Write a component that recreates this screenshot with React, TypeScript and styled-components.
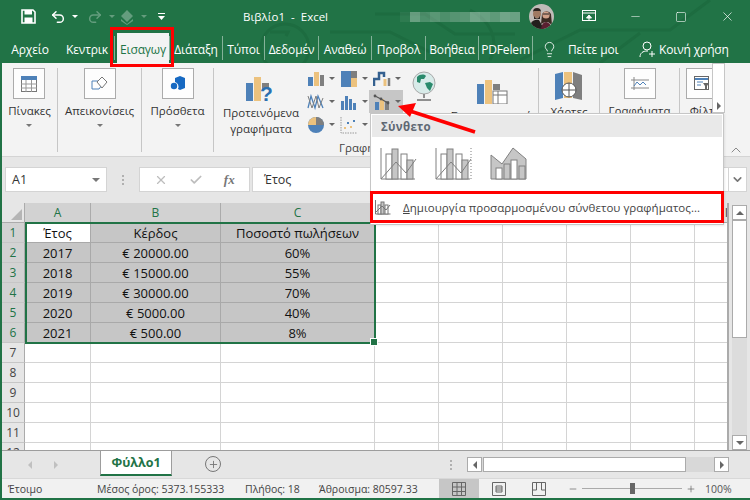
import React from "react";
import styled, { createGlobalStyle } from "styled-components";
import { Undo2, Redo2, ChevronDown, ChevronUp, X, Check, Square, Minus, Plus, Lightbulb } from "lucide-react";

const Global = createGlobalStyle`
  html, body { margin: 0; padding: 0; width: 750px; height: 500px; overflow: hidden; }
  body { font-family: "Open Sans", "Noto Sans", "Liberation Sans", sans-serif; }
  * { box-sizing: border-box; }
`;

const Window = styled.div`
  position: relative; width: 750px; height: 500px; overflow: hidden;
  display: flex; flex-direction: column; background: #217346;
  padding: 0 2px 2px 2px;
  & > * { flex: none; }
`;
const Top = styled.div`
  position: relative; margin: 0 -2px; height: 63px; background: #217346; overflow: hidden;
  display: flex; flex-direction: column;
`;
const Pattern = styled.svg`
  position: absolute; left: 0; top: 0; width: 750px; height: 63px; pointer-events: none;
`;
const TitleBar = styled.div`
  position: relative; height: 33px; display: flex; align-items: center; color: #fff;
`;
const Qat = styled.div`
  display: flex; align-items: center; width: 243px; padding-left: 21px; height: 100%;
`;
const QatItem = styled.span<{ $w: number; $dim?: boolean }>`
  width: ${(p) => p.$w}px; display: flex; align-items: center; opacity: ${(p) => (p.$dim ? 0.3 : 1)};
`;
const Caret = styled.span<{ $color?: string; $size?: number }>`
  display: inline-block; width: 0; height: 0;
  border-left: ${(p) => p.$size ?? 3}px solid transparent;
  border-right: ${(p) => p.$size ?? 3}px solid transparent;
  border-top: ${(p) => p.$size ?? 3}px solid ${(p) => p.$color ?? "#fff"};
`;
const DocTitle = styled.div`
  width: 157px; font-size: 11.5px; text-align: left; white-space: pre;
`;
const Blur = styled.div`
  display: flex; width: 120px; height: 10px;
`;
const BlurCell = styled.span<{ $o: number }>`
  flex: 1; background: rgba(255, 255, 255, ${(p) => p.$o});
`;
const Avatar = styled.div`
  width: 25px; height: 25px; margin-left: 9px; border-radius: 50%; overflow: hidden; flex: none;
`;
const WinButtons = styled.div`
  display: flex; align-items: center; margin-left: auto; height: 100%;
`;
const WinButton = styled.div`
  width: 46px; display: flex; justify-content: center; align-items: center;
`;
const TabRow = styled.div`
  position: relative; height: 30px; display: flex; align-items: center; color: #fff;
`;
const Tab = styled.div<{ $w: number; $active?: boolean; $sep?: boolean; $ml?: number }>`
  width: ${(p) => p.$w}px; flex: none; height: ${(p) => (p.$active ? 30 : 24)}px;
  align-self: ${(p) => (p.$active ? "flex-end" : "center")};
  margin-left: ${(p) => p.$ml ?? 0}px;
  display: flex; align-items: center; justify-content: center; overflow: hidden;
  white-space: nowrap; font-size: 12px; letter-spacing: -0.15px;
  padding-top: ${(p) => (p.$active ? 3 : 2)}px;
  background: ${(p) => (p.$active ? "#f3f3f3" : "transparent")};
  color: ${(p) => (p.$active ? "#217346" : "#fff")};
  border-right: ${(p) => (p.$sep ? "1px solid rgba(255,255,255,.45)" : "none")};
`;
const TabSep = styled.span`
  width: 1px; height: 24px; background: rgba(255,255,255,.45); flex: none; margin-right: -1px;
`;
const TabAction = styled.div<{ $w: number }>`
  width: ${(p) => p.$w}px; display: flex; align-items: center; font-size: 12px; letter-spacing: -0.15px; flex: none; white-space: nowrap; padding-top: 2px;
`;
const TipIcon = styled.span`
  display: flex; margin-left: 8px; margin-right: 10px;
`;
const ShareIcon = styled.span`
  display: flex; margin-right: 3px;
`;

const Ribbon = styled.div`
  position: relative; height: 94px; margin-right: -2px; background: #f3f3f3; display: flex; padding-top: 5px; padding-bottom: 4px;
  border-bottom: 1px solid #d4d4d4;
  overflow: hidden;
`;
const Group = styled.div<{ $w: number; $last?: boolean }>`
  width: ${(p) => p.$w}px; flex: none; height: 84px; border-right: ${(p) => (p.$last ? "none" : "1px solid #c6c6c6")};
  display: flex; justify-content: center;
`;
const Big = styled.div<{ $top?: number; $nudge?: number }>`
  display: flex; flex-direction: column; align-items: center; font-size: 11.5px; color: #333;
  padding-top: ${(p) => p.$top ?? 0}px; margin-left: ${(p) => p.$nudge ?? 0}px;
`;
const IconBox = styled.div`
  width: 32px; height: 31px; background: #fdfdfd; border: 1px solid #ababab;
  display: flex; align-items: center; justify-content: center; flex: none;
`;
const BigLabel = styled.div`
  margin-top: 3px; height: 17px; line-height: 17px; white-space: nowrap;
`;
const BigCaret = styled.div`
  margin-top: 5px; height: 8px; display: flex; justify-content: center;
`;
const ChartsGroup = styled(Group)`
  justify-content: flex-start; position: relative;
`;
const Recommend = styled.div`
  width: 84px; margin-left: 5px; flex: none; display: flex; flex-direction: column; align-items: center; padding-top: 9px;
  font-size: 11.5px; color: #333; text-align: center; line-height: 16px; white-space: nowrap;
`;
const MiniGrid = styled.div`
  flex: none; display: grid; grid-template-columns: 33px 33px 34px; grid-auto-rows: 23px; margin-top: -1px; width: 100px; height: 69px;
`;
const MiniBtn = styled.div<{ $on?: boolean }>`
  display: flex; align-items: center; justify-content: center; gap: 4px; padding-left: 2px;
  background: ${(p) => (p.$on ? "#c6c6c6" : "transparent")};
`;
const MapCol = styled.div`
  width: 41px; flex: none; display: flex; flex-direction: column; align-items: center; padding-top: 3px; font-size: 11.5px; color: #333;
`;
const PivotCol = styled(MapCol)`
  width: 95px; padding-top: 14px; white-space: nowrap;
`;
const GroupTitle = styled.div`
  position: absolute; left: 125px; top: 72px; width: 70px; font-size: 11.5px; color: #444; overflow: hidden; white-space: nowrap;
`;
const Strip = styled.div`
  width: 13px; height: 50px; flex: none; background: #fff; border: 1px solid #c6c6c6;
  margin-top: -5px; display: flex; align-items: flex-end; justify-content: center; padding-bottom: 2px;
`;
const Collapse = styled.div`
  position: absolute; right: 6px; bottom: -2px; color: #555; display: flex;
`;

const FormulaBar = styled.div`
  height: 46px; margin-right: -2px; background: #e6e6e6; display: flex; align-items: flex-start; padding: 10px 3px 0 3px;
`;
const NameBox = styled.div`
  width: 102px; height: 25px; background: #fff; border: 1px solid #d4d4d4; display: flex; align-items: center;
  justify-content: space-between; padding: 0 6px; font-size: 12.5px; color: #333;
`;
const Dots = styled.div`
  width: 32px; height: 25px; display: flex; flex-direction: column; align-items: center; justify-content: center; gap: 2px;
`;
const Dot = styled.span`
  width: 2px; height: 2px; background: #b0b0b0;
`;
const FxBox = styled.div`
  width: 111px; height: 25px; background: #fff; border: 1px solid #d4d4d4; display: flex; align-items: center;
  justify-content: space-around; padding: 0 4px; color: #bdbdbd;
`;
const Fx = styled.i`
  font-family: "Liberation Serif", serif; font-size: 13px; color: #777; font-weight: bold;
`;
const FormulaInput = styled.div`
  width: 477px; margin-left: 2px; height: 25px; background: #fff; border: 1px solid #d4d4d4; font-size: 12.5px; color: #333;
  display: flex; align-items: center; padding-left: 11px;
`;
const Expand = styled.div`
  width: 18px; height: 25px; background: #fff; border: 1px solid #d4d4d4; border-left: none; display: flex; align-items: center; justify-content: center;
  color: #777;
`;

const SheetArea = styled.div`
  display: flex; height: 248px; background: #e6e6e6; margin-right: -2px; border-bottom: 1px solid #9d9d9d;
`;
const Grid = styled.div`
  width: 727px; height: 247px; overflow: hidden; position: relative; background: #fff; border-right: 2px solid #ababab;
  display: grid; grid-template-columns: 23px 66px 130px 154px repeat(6, 64px); grid-auto-rows: 20px;
  align-content: start; flex: none;
`;
const Corner = styled.div`
  background: #e6e6e6; border-right: 1px solid #ababab; border-bottom: 1px solid #ababab; position: relative;
  &::after { content: ""; position: absolute; right: 2px; bottom: 2px; border-style: solid; border-width: 0 0 11px 11px; border-color: transparent transparent #b5b5b5 transparent; }
`;
const ColHead = styled.div<{ $sel?: boolean }>`
  background: ${(p) => (p.$sel ? "#d2d2d2" : "#e6e6e6")}; border-right: 1px solid #ababab; border-bottom: 1px solid #ababab;
  font-size: 12px; color: ${(p) => (p.$sel ? "#217346" : "#444")}; display: flex; align-items: center; justify-content: center; padding-bottom: 1px;
`;
const RowHead = styled.div<{ $sel?: boolean }>`
  background: ${(p) => (p.$sel ? "#d2d2d2" : "#e6e6e6")}; border-right: 1px solid #ababab; border-bottom: 1px solid #c6c6c6;
  font-size: 12px; color: ${(p) => (p.$sel ? "#217346" : "#444")}; display: flex; align-items: center; justify-content: center;
`;
const Cell = styled.div<{ $sel?: boolean; $active?: boolean }>`
  background: ${(p) => (p.$active ? "#fff" : p.$sel ? "#c6c6c6" : "#fff")};
  border-right: 1px solid ${(p) => (p.$sel ? "#a9a9a9" : "#d4d4d4")};
  border-bottom: 1px solid ${(p) => (p.$sel ? "#a9a9a9" : "#d4d4d4")};
  font-size: 13px; color: #111; display: flex; align-items: center; justify-content: center; white-space: nowrap;
`;
const Selection = styled.div`
  position: absolute; left: 23px; top: 19px; width: 351px; height: 122px; border: 2px solid #217346; pointer-events: none;
  &::after { content: ""; position: absolute; right: -4px; bottom: -4px; width: 6px; height: 6px; background: #217346; border: 1px solid #fff; }
`;
const VScroll = styled.div`
  flex: 1; display: flex; flex-direction: column; align-items: center; padding: 2px 3px 0 3px;
`;
const ScrollBtn = styled.div`
  width: 15px; height: 15px; background: #fff; border: 1px solid #ababab; display: flex; align-items: center; justify-content: center; flex: none;
`;
const VTrack = styled.div`
  width: 15px; flex: 1; background: #dcdcdc; display: flex; flex-direction: column;
`;
const VThumb = styled.div`
  width: 15px; height: 118px; background: #fff; border: 1px solid #ababab;
`;
const UpCaret = styled.span`
  width: 0; height: 0; border-left: 4px solid transparent; border-right: 4px solid transparent; border-bottom: 4px solid #666;
`;

const TabsBar = styled.div`
  height: 27px; margin-right: -2px; background: #e6e6e6; display: flex; align-items: flex-start; position: relative;
`;
const SheetNav = styled.div`
  width: 98px; height: 27px; display: flex; align-items: center; padding-left: 26px; gap: 22px;
`;
const SheetTab = styled.div`
  width: 72px; height: 25px; margin-top: 0; background: #fff; border-left: 1px solid #9d9d9d; border-right: 1px solid #9d9d9d;
  border-bottom: 2px solid #217346; color: #217346; font-weight: 700; font-size: 12.5px;
  display: flex; align-items: center; justify-content: center;
`;
const AddSheet = styled.div`
  margin-left: 33px; margin-top: 5px; width: 16px; height: 16px; border-radius: 50%; border: 1.5px solid #777; color: #777;
  display: flex; align-items: center; justify-content: center;
`;
const SplitDots = styled(Dots)`
  position: absolute; left: 433px; top: 1px;
`;
const HScroll = styled.div`
  position: absolute; left: 465px; top: 6px; width: 262px; height: 15px; display: flex; background: #d8d8d8;
`;
const HBtn = styled.div`
  width: 15px; height: 15px; background: #fff; border: 1px solid #ababab; display: flex; align-items: center; justify-content: center; flex: none;
`;
const HThumb = styled.div`
  width: 203px; height: 15px; background: #fff; border: 1px solid #ababab; margin-left: 1px; margin-right: auto;
`;
const Arrow = styled.span<{ $dir: "l" | "r"; $c?: string }>`
  width: 0; height: 0; border-top: 4px solid transparent; border-bottom: 4px solid transparent;
  ${(p) => (p.$dir === "l" ? `border-right: 4px solid ${p.$c ?? "#666"};` : `border-left: 4px solid ${p.$c ?? "#666"};`)}
`;

const Status = styled.div`
  height: 20px; margin-right: -2px; background: #f1f1f1; border-top: 1px solid #d8d8d8; display: flex; align-items: center; font-size: 10.5px; color: #444;
  white-space: nowrap;
`;
const StatusText = styled.span<{ $w: number; $pad?: number }>`
  width: ${(p) => p.$w}px; flex: none; padding-left: ${(p) => p.$pad ?? 0}px;
`;
const ViewBtn = styled.div<{ $on?: boolean }>`
  width: 40px; height: 19px; background: ${(p) => (p.$on ? "#c6c6c6" : "transparent")}; display: flex; align-items: center; justify-content: center; flex: none;
`;
const Zoom = styled.div`
  display: flex; align-items: center; margin-left: 9px; color: #555;
`;
const ZoomTrack = styled.div`
  position: relative; width: 100px; height: 1px; background: #aaa; margin: 0 4px;
`;
const ZoomThumb = styled.span`
  position: absolute; left: 48px; top: -5px; width: 5px; height: 11px; background: #666;
`;
const ZoomPct = styled.span`
  margin-left: 9px;
`;

const Menu = styled.div`
  position: absolute; left: 370px; top: 113px; width: 354px; height: 112px; background: #fff; border: 1px solid #c6c6c6;
  box-shadow: 1px 1px 2px rgba(0,0,0,.08);
  padding: 1px; display: flex; flex-direction: column;
`;
const MenuHead = styled.div`
  height: 22px; background: #e9e9e9; font-size: 11.5px; font-weight: 700; color: #5f6873; display: flex; align-items: center; padding-left: 9px; letter-spacing: .3px;
`;
const MenuIcons = styled.div`
  height: 52px; display: flex; align-items: center; padding-left: 8px; gap: 18px;
`;
const MenuItem = styled.div`
  flex: 1; display: flex; align-items: center; padding-left: 3px; gap: 12px; font-size: 11.5px; color: #444; white-space: nowrap; padding-top: 2px; letter-spacing: .03px;
`;
const Underlined = styled.span`
  text-decoration: underline;
`;
const RedBoxTab = styled.div`
  position: absolute; left: 110px; top: 27px; width: 64px; height: 40px; border: 3px solid #f00;
`;
const RedBoxItem = styled.div`
  position: absolute; left: 370px; top: 191px; width: 354px; height: 32px; border: 3px solid #f00;
`;
const Pointer = styled.svg`
  position: absolute; left: 390px; top: 95px; width: 100px; height: 45px; overflow: visible;
`;

const B = "#4e81b8", Y = "#ecc27e", G = "#7f7f7f";

const ChartIcon = ({ kind }: { kind: number }) => {
  const cs: Record<number, React.ReactNode> = {
    0: <><rect x="1" y="7" width="5" height="9" fill={B} /><rect x="7" y="2" width="5" height="14" fill={Y} /><rect x="13" y="5" width="4" height="11" fill={G} /></>,
    1: <><rect x="1" y="1" width="10" height="16" fill={B} /><rect x="11" y="1" width="6" height="7" fill={G} /><rect x="11" y="8" width="6" height="9" fill={Y} /></>,
    2: <><path d="M1 16V9h5V3h5v4" fill="none" stroke="#34608f" strokeWidth="2.500" /><path d="M12 16v-7" stroke={Y} strokeWidth="3" /><path d="M16 16V8" stroke={G} strokeWidth="2.500" /></>,
    3: <><path d="M1 15L4 3l4 12 3-12 5 12" fill="none" stroke={B} strokeWidth="1.3" /><path d="M1 3l4 12 4-12 3 12 4-10" fill="none" stroke={G} strokeWidth="1" /></>,
    4: <><rect x="1" y="8" width="3" height="9" fill={B} /><rect x="5" y="3" width="3" height="14" fill={B} /><rect x="9" y="6" width="3" height="11" fill={B} /><rect x="13" y="10" width="3" height="7" fill={B} /></>,
    5: <><rect x="2" y="9" width="4" height="8" fill={B} /><rect x="7" y="6" width="4" height="11" fill={Y} /><rect x="12" y="8" width="4" height="9" fill={G} /><path d="M2 3l6 3 7 4" fill="none" stroke="#555" strokeWidth="1.2" /><circle cx="2" cy="3" r="1.400" fill="#555" /><circle cx="8" cy="6" r="1.400" fill="#555" /><circle cx="15" cy="10" r="1.400" fill="#555" /></>,
    6: <><circle cx="9" cy="9" r="8" fill={B} /><path d="M9 9V1a8 8 0 0 1 8 8z" fill={G} /><path d="M9 9H1a8 8 0 0 1 8-8z" fill={Y} /></>,
    7: <><path d="M1 1v16h16" fill="none" stroke="#999" strokeWidth="1" strokeDasharray="1.500 1" /><rect x="4" y="11" width="2" height="2" fill={Y} /><rect x="7" y="6" width="2" height="2" fill={B} /><rect x="10" y="10" width="2" height="2" fill={Y} /><rect x="13" y="4" width="2" height="2" fill={B} /></>,
  };
  return <svg width="18" height="18" viewBox="0 0 18 18">{cs[kind]}</svg>;
};

const ComboIcon = ({ variant }: { variant: number }) => {
  if (variant === 2) {
    return (
      <svg width="37" height="33" viewBox="0 0 37 33" fill="none">
        <path d="M1 32V8l11 9 11-16 13 11v20z" fill="#c6c6c6" stroke="#808080" />
        <rect x="6" y="21" width="6" height="11" fill="#fff" stroke="#808080" />
        <rect x="14" y="17" width="6" height="15" fill="#c6c6c6" stroke="#808080" />
        <rect x="21" y="13" width="6" height="19" fill="#fff" stroke="#808080" />
        <rect x="29" y="19" width="6" height="13" fill="#c6c6c6" stroke="#808080" />
      </svg>
    );
  }
  return (
    <svg width="37" height="33" viewBox="0 0 37 33" fill="none">
      <path d="M1 1v31h34" stroke="#808080" />
      <rect x="6" y="7" width="6" height="25" fill="#fff" stroke="#808080" />
      <rect x="12" y="2" width="6" height="30" fill="#c6c6c6" stroke="#808080" />
      <rect x="21" y="7" width="6" height="25" fill="#fff" stroke="#808080" />
      <rect x="27" y="13" width="6" height="19" fill="#c6c6c6" stroke="#808080" />
      <path d="M1 32l15-17 10 11 10-14" stroke="#808080" />
      {variant === 1 && <path d="M36 1v31" stroke="#808080" strokeDasharray="1 2" />}
    </svg>
  );
};

const Globe = () => (
  <svg width="24" height="31" viewBox="0 0 24 31">
    <circle cx="12" cy="12" r="11" fill="#d8ebe9" stroke="#a8a8a8" />
    <path d="M5 6c3-3 7-3 9-1l-2 3-3 0-1 4-3-1zM13 12l5-1 3 2-3 7-3-3z" fill="#2a8a6c" />
    <path d="M12 23v4M5 29h14" stroke="#8f8f8f" strokeWidth="2" />
  </svg>
);

const cols = ["A", "B", "C", "D", "E", "F", "G", "H", "I"];
const data = [
  ["Έτος", "Κέρδος", "Ποσοστό πωλήσεων"],
  ["2017", "€ 20000.00", "60%"],
  ["2018", "€ 15000.00", "55%"],
  ["2019", "€ 30000.00", "70%"],
  ["2020", "€ 5000.00", "40%"],
  ["2021", "€ 500.00", "8%"],
];
const blur = [0.06, 0.32, 0.2, 0.26, 0.2, 0.24, 0.26, 0.36, 0.32, 0.28, 0.36, 0.33];
const rest = [
  { t: "Διάταξη", w: 53 },
  { t: "Τύποι", w: 42 },
  { t: "Δεδομέν", w: 54 },
  { t: "Αναθεώ", w: 53 },
  { t: "Προβολ", w: 54 },
  { t: "Βοήθεια", w: 53 },
  { t: "PDFelem", w: 54 },
];

export default function App() {
  return (
    <>
      <Global />
      <Window>
        <Top>
          <Pattern viewBox="0 0 750 63" fill="none" stroke="#1d6c40" strokeWidth="3">
            <circle cx="285" cy="48" r="24" />
            <path d="M270 32h18l-2 4M330 32h60l40 20M375 14h50l30 20 60 0M520 60l60-30h90l40-30M600 63l40-30M470 10c20 10 30 30 20 50" />
          </Pattern>
          <TitleBar>
            <Qat>
              <QatItem $w={29}>
                <svg width="15" height="15" viewBox="0 0 15 15" fill="none"><path d="M1 1h11l2 2v11H1z" stroke="#fff" strokeWidth="1.600" /><rect x="3.500" y="1" width="7.500" height="4.500" fill="#fff" /><rect x="3.500" y="8.500" width="8" height="5.500" fill="#fff" /></svg>
              </QatItem>
              <QatItem $w={22}><Undo2 size={16} strokeWidth={2.2} /></QatItem>
              <QatItem $w={15}><Caret /></QatItem>
              <QatItem $w={22} $dim><Redo2 size={16} strokeWidth={2.2} /></QatItem>
              <QatItem $w={10} $dim><Caret /></QatItem>
              <QatItem $w={22} $dim>
                <svg width="16" height="16" viewBox="0 0 16 16" fill="#fff"><path d="M8 1l6 6-6 6-6-6zM2 10l6 5 6-5v2l-6 4-6-4z" /></svg>
              </QatItem>
              <QatItem $w={17} $dim><Caret /></QatItem>
              <QatItem $w={10}>
                <svg width="7" height="7" viewBox="0 0 7 7" fill="#fff"><rect x="0" y="0" width="7" height="1" /><path d="M0 3h7L3.500 7z" /></svg>
              </QatItem>
            </Qat>
            <DocTitle>Βιβλίο1  -  Excel</DocTitle>
            <Blur>{blur.map((o, i) => <BlurCell key={i} $o={o} />)}</Blur>
            <Avatar>
              <svg width="25" height="25" viewBox="0 0 25 25">
                <rect width="25" height="25" fill="#c0bcb8" />
                <circle cx="8" cy="10" r="4" fill="#a07a63" />
                <path d="M4 8a4 4 0 0 1 8 0l-1-1H5zM5 12q3 5 6 0v3H5z" fill="#2c2420" />
                <path d="M2 25v-6q3-4 8-3l5 9z" fill="#231f1d" />
                <path d="M13 10a5 5 0 0 1 9 0l1 11-4-3h-3l-4 2z" fill="#3b2a22" />
                <circle cx="17" cy="11" r="3.600" fill="#d0a088" />
                <path d="M14 10h6" stroke="#222" strokeWidth="1" />
                <path d="M12 25q1-7 5-7t6 7z" fill="#5a2030" />
              </svg>
            </Avatar>
            <WinButtons>
              <WinButton>
                <svg width="14" height="13" viewBox="0 0 14 13" fill="none" stroke="#fff"><rect x="0.500" y="0.500" width="13" height="10" /><path d="M0 3h14" /><path d="M4.500 8L7 5l2.500 3zM7 7v4" fill="#fff" /></svg>
              </WinButton>
              <WinButton><Minus size={13} strokeWidth={1} /></WinButton>
              <WinButton><Square size={12} strokeWidth={1.2} /></WinButton>
              <WinButton><X size={15} strokeWidth={1.1} /></WinButton>
            </WinButtons>
          </TitleBar>
          <TabRow>
            <Tab $w={60}>Αρχείο</Tab>
            <Tab $w={55} $sep>Κεντρικ</Tab>
            <Tab $w={52} $active $ml={2}>Εισαγωγ</Tab>
            <TabSep />
            <Tab $w={1} />
            {rest.map((t) => <Tab key={t.t} $w={t.w} $sep>{t.t}</Tab>)}
            <TabAction $w={106}>
              <TipIcon><Lightbulb size={17} strokeWidth={1.2} /></TipIcon>
              <span>Πείτε μοι</span>
            </TabAction>
            <TabAction $w={90}>
              <ShareIcon>
                <svg width="17" height="17" viewBox="0 0 17 17" fill="none" stroke="#fff" strokeWidth="1"><circle cx="8" cy="5" r="4" /><path d="M1 16c0-4 3-6 7-6h1M13 10v6M10 13h6" /></svg>
              </ShareIcon>
              Κοινή χρήση
            </TabAction>
          </TabRow>
        </Top>
        <Ribbon>
          <Group $w={56}>
            <Big>
              <IconBox>
                <svg width="16" height="16" viewBox="0 0 16 16"><rect x="0.500" y="0.500" width="15" height="15" fill="#fff" stroke="#777" /><rect x="0" y="0" width="16" height="4" fill="#4e81b8" /><path d="M0 8h16M0 12h16M5 4v12M10.500 4v12" stroke="#999" /></svg>
              </IconBox>
              <BigLabel>Πίνακες</BigLabel>
              <BigCaret><Caret $color="#777" /></BigCaret>
            </Big>
          </Group>
          <Group $w={84}>
            <Big>
              <IconBox>
                <svg width="18" height="16" viewBox="0 0 18 16" fill="none"><path d="M1 5h7l3 4-3 4H1z" stroke="#4e81b8" /><path d="M11 1l5 5-5 6-5-6z" fill="#fff" stroke="#777" /></svg>
              </IconBox>
              <BigLabel>Απεικονίσεις</BigLabel>
              <BigCaret><Caret $color="#777" /></BigCaret>
            </Big>
          </Group>
          <Group $w={72}>
            <Big>
              <IconBox>
                <svg width="16" height="16" viewBox="0 0 16 16" fill="#1769c2"><path d="M5 2l5-2 5 2v10l-5 2-2-1a5 5 0 0 0-3-7z" /><circle cx="4" cy="10" r="3.200" /></svg>
              </IconBox>
              <BigLabel>Πρόσθετα</BigLabel>
              <BigCaret><Caret $color="#777" /></BigCaret>
            </Big>
          </Group>
          <ChartsGroup $w={325}>
            <Recommend>
              <svg width="30" height="24" viewBox="0 0 30 24" style={{ marginBottom: 4 }}>
                <rect x="0" y="6" width="7" height="18" fill={B} /><rect x="8" y="0" width="7" height="24" fill={Y} /><rect x="16" y="6" width="7" height="6" fill={G} />
                <text x="14" y="24" fontSize="21" fontWeight="700" fill="#2b70b0" fontFamily="Liberation Sans">?</text>
              </svg>
              <span>Προτεινόμενα</span>
              <span>γραφήματα</span>
            </Recommend>
            <MiniGrid>
              {[0, 1, 2, 3, 4, 5, 6, 7].map((k) => (
                <MiniBtn key={k} $on={k === 5}><ChartIcon kind={k} /><Caret $color="#666" /></MiniBtn>
              ))}
            </MiniGrid>
            <MapCol><Globe /></MapCol>
            <PivotCol>
              <svg width="32" height="24" viewBox="0 0 32 24" style={{ marginTop: -2 }}>
                <rect x="1" y="4" width="7" height="20" fill={B} /><rect x="9" y="0" width="7" height="24" fill={Y} /><rect x="17" y="4" width="7" height="6" fill={G} />
                <rect x="17" y="11" width="14" height="13" fill="#fff" stroke="#777" /><path d="M17 15h14M22 11v13" stroke="#777" />
              </svg>
              <BigLabel>Συγκεντρωτικό</BigLabel>
            </PivotCol>
            <GroupTitle>Γραφήματα</GroupTitle>
          </ChartsGroup>
          <Group $w={61}>
            <Big $top={3}>
              <svg width="30" height="29" viewBox="0 0 30 29">
                <path d="M1 3l8-2v26l-8 2z" fill={B} /><path d="M10 1h8v26h-8z" fill={Y} /><path d="M19 1l9 3v25l-9-2z" fill={G} />
                <circle cx="15" cy="19" r="7" fill="#fff" stroke="#555" /><path d="M8 19h14M15 12v14" stroke="#555" />
              </svg>
              <BigLabel>Χάρτες</BigLabel>
            </Big>
          </Group>
          <Group $w={80}>
            <Big>
              <IconBox>
                <svg width="18" height="16" viewBox="0 0 18 16" fill="none"><path d="M3 1v13M0 12h18M0 4h18" stroke="#888" /><path d="M3 10l3-4 3 3 3-3 3 3" stroke="#4e81b8" /></svg>
              </IconBox>
              <BigLabel>Γραφήματα</BigLabel>
            </Big>
          </Group>
          <Group $w={32} $last>
            <Big $nudge={12}>
              <IconBox>
                <svg width="16" height="16" viewBox="0 0 16 16"><rect x="0.500" y="0.500" width="14" height="13" fill="#fff" stroke="#666" /><rect x="1" y="2" width="13" height="2" fill={B} /><path d="M3 6h6M3 9h4" stroke="#4e81b8" /><path d="M9 7h6l-2 3v4l-2-1v-3z" fill="#666" /></svg>
              </IconBox>
              <BigLabel>Φίλτ</BigLabel>
            </Big>
          </Group>
          <Strip><Arrow $dir="r" /></Strip>
          <Collapse><ChevronUp size={16} strokeWidth={1} /></Collapse>
        </Ribbon>
        <FormulaBar>
          <NameBox>A1<Caret $color="#777" $size={4} /></NameBox>
          <Dots><Dot /><Dot /><Dot /></Dots>
          <FxBox><X size={14} /><Check size={14} strokeWidth={3} /><Fx>fx</Fx></FxBox>
          <FormulaInput>Έτος</FormulaInput>
          <Expand><ChevronDown size={13} strokeWidth={3} /></Expand>
        </FormulaBar>
        <SheetArea>
          <Grid>
            <Corner />
            {cols.map((c, i) => <ColHead key={c} $sel={i < 3}>{c}</ColHead>)}
            {Array.from({ length: 12 }).map((_, r) => (
              <React.Fragment key={r}>
                <RowHead $sel={r < 6}>{r + 1}</RowHead>
                {cols.map((c, i) => (
                  <Cell key={c} $sel={r < 6 && i < 3} $active={r === 0 && i === 0}>
                    {r < 6 && i < 3 ? data[r][i] : ""}
                  </Cell>
                ))}
              </React.Fragment>
            ))}
            <Selection />
          </Grid>
          <VScroll>
            <ScrollBtn><UpCaret /></ScrollBtn>
            <VTrack><VThumb /></VTrack>
            <ScrollBtn><Caret $color="#666" $size={4} /></ScrollBtn>
          </VScroll>
        </SheetArea>
        <TabsBar>
          <SheetNav><Arrow $dir="l" $c="#c0c0c0" /><Arrow $dir="r" $c="#c0c0c0" /></SheetNav>
          <SheetTab>Φύλλο1</SheetTab>
          <AddSheet><Plus size={11} strokeWidth={2} /></AddSheet>
          <SplitDots><Dot /><Dot /><Dot /></SplitDots>
          <HScroll>
            <HBtn><Arrow $dir="l" /></HBtn>
            <HThumb />
            <HBtn><Arrow $dir="r" /></HBtn>
          </HScroll>
        </TabsBar>
        <Status>
          <StatusText $w={95} $pad={6}>Έτοιμο</StatusText>
          <StatusText $w={148}>Μέσος όρος: 5373.155333</StatusText>
          <StatusText $w={74}>Πλήθος: 18</StatusText>
          <StatusText $w={120}>Άθροισμα: 80597.33</StatusText>
          <ViewBtn $on>
            <svg width="14" height="14" viewBox="0 0 14 14" fill="none" stroke="#666"><path d="M.5.500h13v13H.5zM.5 5h13M.5 9.500h13M5 .500v13M9.500 .500v13" /></svg>
          </ViewBtn>
          <ViewBtn>
            <svg width="14" height="14" viewBox="0 0 14 14" fill="none" stroke="#666"><path d="M.5.500h13v13H.5zM4 4h6v6H4zM4 6h6M4 8h6" /></svg>
          </ViewBtn>
          <ViewBtn>
            <svg width="14" height="14" viewBox="0 0 14 14" fill="none" stroke="#666"><path d="M.5.500h13v13H.5zM.5 8h4V.500M9.500 .500V8h4" /></svg>
          </ViewBtn>
          <Zoom>
            <Minus size={10} strokeWidth={1.5} />
            <ZoomTrack><ZoomThumb /></ZoomTrack>
            <Plus size={10} strokeWidth={1.5} />
            <ZoomPct>100%</ZoomPct>
          </Zoom>
        </Status>

        <Menu>
          <MenuHead>Σύνθετο</MenuHead>
          <MenuIcons>
            <ComboIcon variant={0} />
            <ComboIcon variant={1} />
            <ComboIcon variant={2} />
          </MenuIcons>
          <MenuItem>
            <svg width="16" height="16" viewBox="0 0 16 16" fill="none" stroke="#777"><path d="M.5 1v14h15" /><rect x="3" y="6" width="3" height="9" fill="#fff" /><rect x="6" y="3" width="3" height="12" fill="#c6c6c6" /><rect x="10" y="6" width="3" height="9" fill="#fff" /><path d="M1 13l6-6 4 4 4-5" /></svg>
            <span><Underlined>Δ</Underlined>ημιουργία προσαρμοσμένου σύνθετου γραφήματος...</span>
          </MenuItem>
        </Menu>
        <RedBoxTab />
        <RedBoxItem />
        <Pointer viewBox="0 0 100 45">
          <path d="M85 37L20 16" stroke="#f00" strokeWidth="3.500" />
          <path d="M8 11l18-3-6 14z" fill="#f00" />
        </Pointer>
      </Window>
    </>
  );
}
